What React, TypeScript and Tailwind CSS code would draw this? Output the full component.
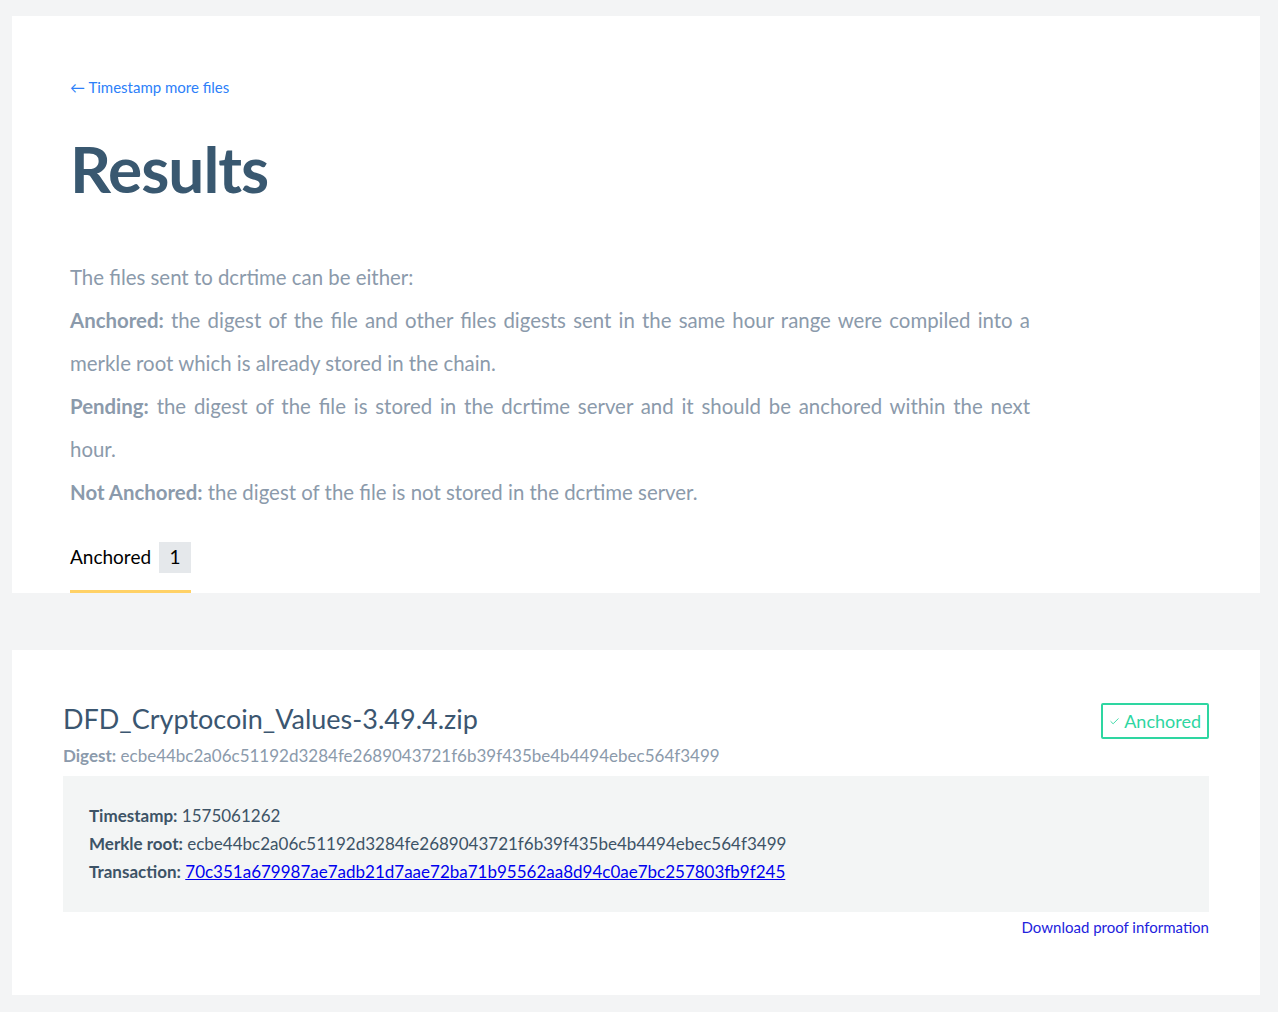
import { Check } from "lucide-react";

const font = { fontFamily: "Lato, 'Liberation Sans', sans-serif" };

export default function App() {
  return (
    <div className="min-h-screen bg-[#f3f4f5] pl-3 pr-[18px] pt-4 pb-4" style={font}>
      <div className="bg-white px-[58px] pt-[59px]">
        <a href="#" className="text-[15px] text-[#2d7ff9] leading-[20px]">
          ← Timestamp more files
        </a>
        <h1 className="mt-[30px] text-[64px] leading-[80px] font-bold tracking-[-1px] text-[#395870]">
          Results
        </h1>
        <div className="mt-[47px] w-[960px] text-[20.4px] leading-[43px] text-[#8b9aab] text-justify">
          <p>The files sent to dcrtime can be either:</p>
          <p>
            <b className="font-bold">Anchored:</b> the digest of the file and other files digests sent in the same
            hour range were compiled into a merkle root which is already stored in the chain.
          </p>
          <p>
            <b className="font-bold">Pending:</b> the digest of the file is stored in the dcrtime server and it should be
            anchored within the next hour.
          </p>
          <p>
            <b className="font-bold">Not Anchored:</b> the digest of the file is not stored in the dcrtime server.
          </p>
        </div>
        <div className="mt-[28px] flex">
          <div className="flex flex-col">
            <div className="flex items-center gap-2">
              <span className="text-[19px] text-black">Anchored</span>
              <span className="bg-[#e5e8eb] w-8 h-[31px] flex items-center justify-center text-[19px] text-black">
                1
              </span>
            </div>
            <div className="mt-[17px] h-[3px] bg-[#ffd166]" />
          </div>
        </div>
      </div>

      <div className="mt-[57px] bg-white px-[51px] pt-[52px] pb-[56px]">
        <div className="flex items-start justify-between">
          <div>
            <div className="text-[27px] leading-[34px] text-[#3b5670]">DFD_Cryptocoin_Values-3.49.4.zip</div>
            <div className="mt-[8px] text-[17px] leading-[24px] text-[#8b9aab]">
              <b className="font-bold">Digest:</b> ecbe44bc2a06c51192d3284fe2689043721f6b39f435be4b4494ebec564f3499
            </div>
          </div>
          <div className="mt-[1px] border-2 border-[#2ed6a1] rounded-[2px] h-9 px-[6px] flex items-center gap-1 text-[18px] text-[#2ed6a1]">
            <Check size={11} strokeWidth={2} />
            <span>Anchored</span>
          </div>
        </div>
        <div className="mt-[8px] bg-[#f3f5f5] px-[26px] py-[26px] text-[17px] leading-[28px] text-[#3d5366]">
          <div>
            <b className="font-bold">Timestamp:</b> 1575061262
          </div>
          <div>
            <b className="font-bold">Merkle root:</b> ecbe44bc2a06c51192d3284fe2689043721f6b39f435be4b4494ebec564f3499
          </div>
          <div>
            <b className="font-bold">Transaction:</b>{" "}
            <a href="#" className="text-[#0000ee] underline">
              70c351a679987ae7adb21d7aae72ba71b95562aa8d94c0ae7bc257803fb9f245
            </a>
          </div>
        </div>
        <div className="mt-[4px] flex justify-end">
          <a href="#" className="text-[15px] text-[#2222dd]">
            Download proof information
          </a>
        </div>
      </div>
    </div>
  );
}
